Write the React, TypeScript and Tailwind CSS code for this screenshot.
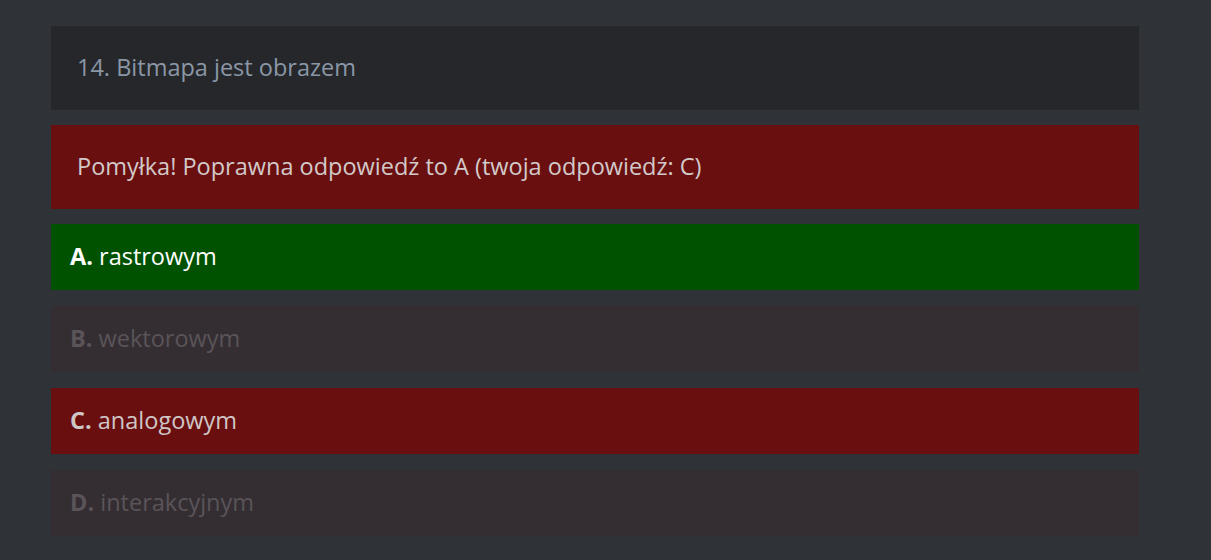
import React from "react";

const answers = [
  { l: "A.", t: "rastrowym", box: "bg-[#005200] text-white" },
  { l: "B.", t: "wektorowym", box: "bg-[#342e33] text-[#5a5458]" },
  { l: "C.", t: "analogowym", box: "bg-[#6a0f10] text-[#cfc6c6]" },
  { l: "D.", t: "interakcyjnym", box: "bg-[#342e33] text-[#5a5458]" },
];

export default function App() {
  return (
    <div
      className="w-[1211px] h-[560px] bg-[#2f3237] pt-[26px] pl-[51px]"
      style={{ fontFamily: '"Open Sans", "Noto Sans", sans-serif' }}
    >
      <div className="w-[1088px] flex flex-col">
        <div className="h-[84px] bg-[#25272b] flex items-center px-[26px] text-[23.5px] text-[#8b97a6]">
          14. Bitmapa jest obrazem
        </div>
        <div className="mt-[15px] h-[84px] bg-[#6a0f10] flex items-center px-[26px] text-[23.5px] text-[#d2c9c9]">
          Pomyłka! Poprawna odpowiedź to A (twoja odpowiedź: C)
        </div>
        <div className="mt-[15px] flex flex-col gap-[16px]">
          {answers.map((a) => (
            <div key={a.l} className={`h-[66px] flex items-center px-[19px] text-[23.5px] whitespace-pre ${a.box}`}>
              <span className="font-bold">{a.l}</span>
              <span>{" " + a.t}</span>
            </div>
          ))}
        </div>
      </div>
    </div>
  );
}
